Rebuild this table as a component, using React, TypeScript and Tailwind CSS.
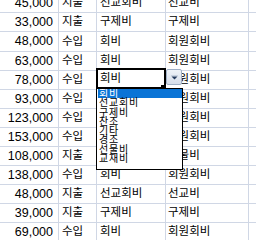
import React from 'react';

const rows: string[][] = [
  ['45,000', '지출', '선교회비', '선교비'],
  ['33,000', '지출', '구제비', '구제비'],
  ['48,000', '수입', '회비', '회원회비'],
  ['63,000', '수입', '회비', '회원회비'],
  ['78,000', '수입', '회비', '회원회비'],
  ['93,000', '수입', '회비', '회원회비'],
  ['123,000', '수입', '회비', '회원회비'],
  ['153,000', '수입', '회비', '회원회비'],
  ['108,000', '지출', '선물비', '선물비'],
  ['138,000', '수입', '회비', '회원회비'],
  ['48,000', '지출', '선교회비', '선교비'],
  ['39,000', '지출', '구제비', '구제비'],
  ['69,000', '수입', '회비', '회원회비'],
];

const options = ['회비', '선교회비', '구제비', '찬조', '기타', '경조', '선물비', '교재비'];

const font = { fontFamily: '"Liberation Sans", "Noto Sans CJK KR", sans-serif' };

export default function App() {
  return (
    <div className="relative w-[256px] h-[240px] overflow-hidden bg-white text-black" style={font}>
      {/* sheet */}
      <div className="-mt-[6px] flex flex-col">
        {rows.map((r, i) => (
          <div
            key={i}
            className={
              'flex border-b border-[#d0d7e5] ' + (i === 2 ? 'h-[20px]' : 'h-[19px]')
            }
          >
            <div className="w-[59px] shrink-0 border-r border-[#d0d7e5] flex items-center justify-end pr-[5px] text-[12.5px]">
              {r[0]}
            </div>
            <div className="w-[38px] shrink-0 border-r border-[#d0d7e5] flex items-center pl-[3px] text-[11.5px] whitespace-nowrap overflow-hidden">
              {r[1]}
            </div>
            <div className="w-[69px] shrink-0 border-r border-[#d0d7e5] flex items-center pl-[3px] text-[11.5px] whitespace-nowrap">
              {r[2]}
            </div>
            <div className="w-[83px] shrink-0 border-r border-[#d0d7e5] flex items-center pl-[2px] text-[11.5px] whitespace-nowrap">
              {r[3]}
            </div>
            <div className="flex-1" />
          </div>
        ))}
      </div>

      {/* active cell */}
      <div className="absolute left-[96px] top-[68px] w-[70px] h-[21px] border-2 border-black bg-white flex items-center pl-[2px] text-[11.5px]">
        회비
      </div>
      <div className="absolute left-[161px] top-[85px] w-[4px] h-[4px] bg-black" />

      {/* dropdown button */}
      <div className="absolute left-[166px] top-[69px] w-[16px] h-[16px] rounded-[2px] border border-[#9fb0c6] bg-gradient-to-b from-[#eef2f8] to-[#d6deea] flex items-center justify-center">
        <svg width="7" height="5" viewBox="0 0 7 5">
          <rect x="0" y="0" width="7" height="1" fill="#c8d2e0" />
          <path d="M0.5 1.5 L6.5 1.5 L3.5 4.5 Z" fill="#22385c" />
        </svg>
      </div>

      {/* list */}
      <div className="absolute left-[96px] top-[88px] w-[87px] h-[82px] border border-black bg-white pl-[1px] overflow-hidden">
        {options.map((o, i) => (
          <div
            key={o}
            className={
              'h-[9.25px] leading-[9px] text-[10px] tracking-[0.8px] pl-[1px] whitespace-nowrap ' +
              (i === 0 ? 'bg-[#0a74d6] text-white' : 'text-black')
            }
          >
            {o}
          </div>
        ))}
      </div>
    </div>
  );
}
